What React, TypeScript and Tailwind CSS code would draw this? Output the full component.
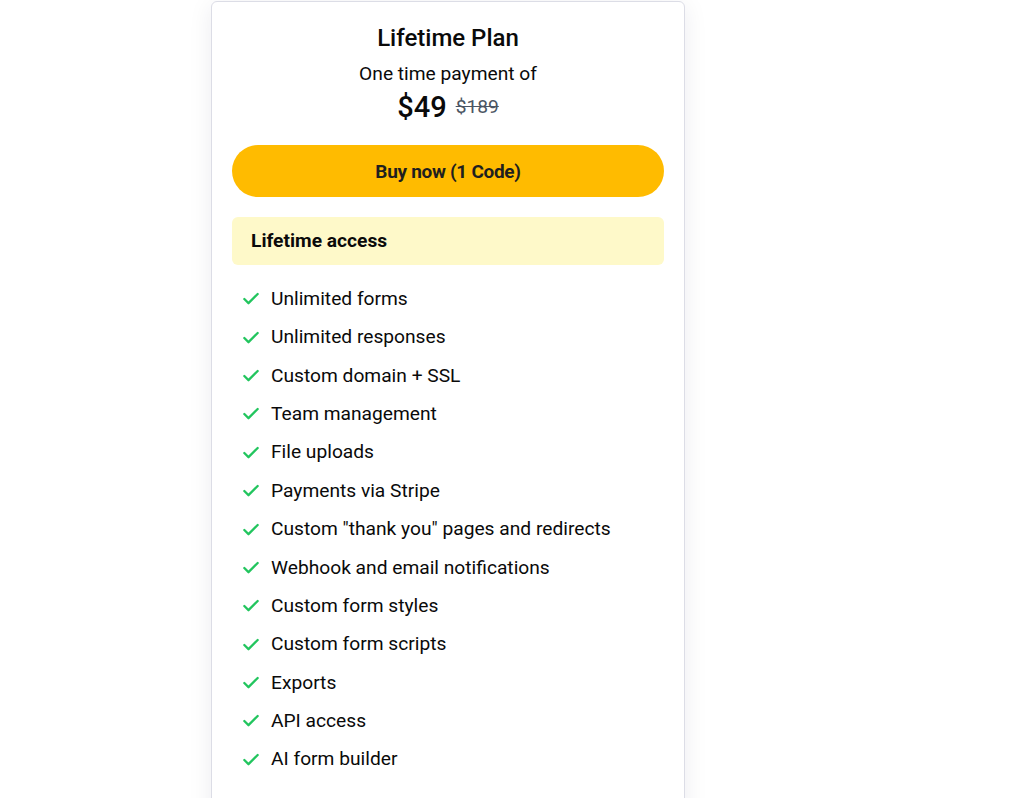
import React from "react";
import { Check } from "lucide-react";

const features = [
  "Unlimited forms",
  "Unlimited responses",
  "Custom domain + SSL",
  "Team management",
  "File uploads",
  "Payments via Stripe",
  'Custom "thank you" pages and redirects',
  "Webhook and email notifications",
  "Custom form styles",
  "Custom form scripts",
  "Exports",
  "API access",
  "AI form builder",
];

export default function App() {
  return (
    <div
      className="min-h-[798px] w-[1010px] bg-white overflow-hidden text-[#0a0a0a]"
      style={{ fontFamily: "Roboto, 'Liberation Sans', sans-serif" }}
    >
      <div className="ml-[211px] mt-px w-[474px] h-[820px] rounded-md border border-[#dcdde6] bg-white px-5 pt-5 shadow-[0_4px_24px_rgba(30,30,60,0.08)] flex flex-col">
        <h2 className="text-center text-[24px] leading-[32px] font-medium">Lifetime Plan</h2>
        <p className="mt-[6px] text-center text-[19.2px] leading-[28px]">One time payment of</p>
        <div className="mt-[1px] flex items-center justify-center gap-[9px]">
          <span className="text-[29px] leading-[36px] font-medium">$49</span>
          <span className="text-[19.2px] leading-[28px] text-[#4b5563] line-through">$189</span>
        </div>
        <button className="mt-[20px] h-[52px] w-full shrink-0 rounded-full bg-[#ffbb00] pt-[2px] text-[19px] font-bold text-[#1f1f1f] tracking-[-0.3px]">
          Buy now (1 Code)
        </button>
        <div className="mt-[20px] h-[48px] shrink-0 rounded-md bg-[#fef9c9] flex items-center px-[19px] text-[19.2px] font-bold">
          Lifetime access
        </div>
        <ul className="mt-[15px] flex flex-col">
          {features.map((f) => (
            <li key={f} className="h-[38.4px] flex items-center pl-[9px] gap-[10px] text-[19.2px]">
              <Check className="w-[20px] h-[20px] text-[#22c55e] shrink-0" strokeWidth={2.75} />
              <span>{f}</span>
            </li>
          ))}
        </ul>
      </div>
    </div>
  );
}
